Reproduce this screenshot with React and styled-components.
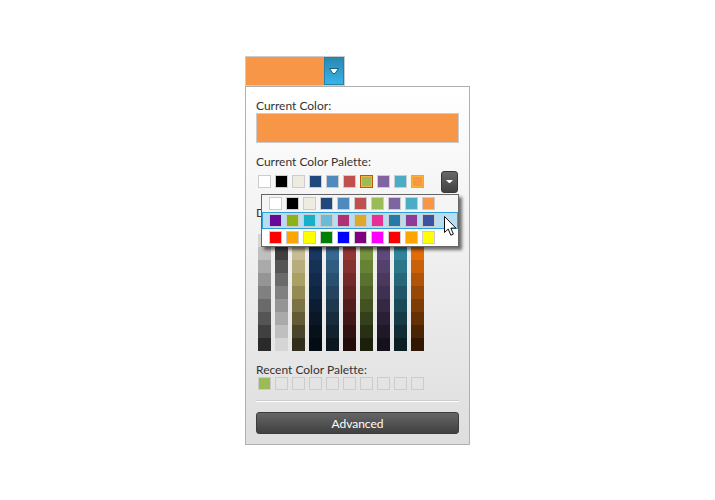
import React, { useState } from 'react';
import styled, { createGlobalStyle } from 'styled-components';

const GlobalStyle = createGlobalStyle`
  *, *::before, *::after { box-sizing: border-box; }
  body {
    margin: 0;
    background: #fff;
    color: #333;
    font: 12px/15px Lato, "Open Sans", sans-serif;
    font-variant-ligatures: none;
  }
  button { font: inherit; padding: 0; cursor: default; }
`;

const Page = styled.main`
  display: flex;
  justify-content: center;
  min-height: 100vh;
  padding: 56px 16px;
`;

const Picker = styled.div`
  width: 225px;
`;

const SplitButton = styled.div`
  display: flex;
  width: 100px;
  height: 30px;
  border: 1px solid #ccc;
`;

const SelectedColor = styled.button`
  flex: 1;
  border: 0;
  background: ${(p) => p.$color};
`;

const DropToggle = styled.button`
  display: grid;
  place-items: center;
  width: 20px;
  border: 1px solid #2382ab;
  background: linear-gradient(#2989b3, #37b3e9);
`;

const Panel = styled.section`
  display: flex;
  flex-direction: column;
  padding: 11px 10px 10px;
  border: 1px solid #b0b0b0;
  background: linear-gradient(#fff, #dedede);
`;

const Label = styled.h2`
  margin: 0;
  font: inherit;
  font-variant-ligatures: none;
  white-space: nowrap;
`;

const Preview = styled.div`
  height: 30px;
  margin-bottom: 11px;
  border: 1px solid #ccc;
  background: ${(p) => p.$color};
`;

const PaletteBar = styled.div`
  position: relative;
  display: flex;
  justify-content: space-between;
  height: 22px;
  margin: 2px 0 12px;
`;

const SwatchRow = styled.div`
  display: flex;
  gap: 4px;
  padding: ${(p) => p.$pad || '0 2px'};
`;

const Swatch = styled.button`
  width: 13px;
  height: 13px;
  border: 1px solid ${(p) => p.$edge || '#ccc'};
  background: ${(p) => p.$color || 'transparent'};
  box-shadow: ${(p) => (p.$glow ? `inset 0 0 0 1px ${p.$glow}` : 'none')};
`;

const MenuButton = styled.button`
  display: grid;
  place-items: center;
  width: 17px;
  height: 22px;
  margin-right: 1px;
  border: 1px solid #383838;
  border-radius: 3px;
  background: linear-gradient(#686868, #404040);
`;

const PaletteMenu = styled.div`
  position: absolute;
  z-index: 1;
  top: 23px;
  left: 5px;
  right: 0;
  border: 1px solid #666;
  background: #fff;
  box-shadow: 3px 3px 3px rgba(0, 0, 0, 0.55);
`;

const PaletteOption = styled.div`
  display: flex;
  gap: 4px;
  height: 17px;
  padding: 2px 7px;
  outline: ${(p) => (p.$active ? '1px solid #2da0da' : 'none')};
  outline-offset: -1px;
  background: ${(p) => (p.$active ? '#b6def0' : p.$current ? '#f5f5f5' : '#fff')};
`;

const Pointer = styled.svg`
  position: absolute;
  z-index: 2;
  top: 45px;
  left: 188px;
`;

const Shades = styled.div`
  display: flex;
  gap: 4px;
  padding: 0 2px;
  margin: 14px 0 11px;
`;

const ShadeColumn = styled.div`
  display: flex;
  flex-direction: column;
`;

const Shade = styled.button`
  width: 13px;
  height: 13px;
  border: 0;
  background: ${(p) => p.$color};
`;

const Divider = styled.hr`
  width: 100%;
  height: 2px;
  margin: 10px 0;
  border: 0;
  border-top: 1px solid #ccc;
  background: #fff;
`;

const AdvancedButton = styled.button`
  height: 22px;
  border: 1px solid #3c3c3c;
  border-radius: 3px;
  background: linear-gradient(#666, #404040);
  color: #fff;
`;

const office = ['#ffffff', '#000000', '#eeece1', '#1f497d', '#4f8abe', '#c0504d', '#9bbb59', '#8064a2', '#4bacc6', '#f79646'];
const palettes = [
  { name: 'Office', colors: office },
  { name: 'Verve', colors: ['#66099b', '#8bb313', '#18b0c8', '#6abbd8', '#b03078', '#dca92d', '#e53197', '#257ba7', '#8f3c98', '#3c53a2'] },
  { name: 'Bright', colors: ['#ff0000', '#ffa500', '#ffff00', '#008000', '#0000ff', '#800080', '#ff00ff', '#ff0000', '#ffa500', '#ffff00'] },
];
const shades = [
  ['#d5d5d5', '#bfbfbf', '#aaaaaa', '#959595', '#808080', '#6a6a6a', '#555555', '#404040', '#2a2a2a'],
  ['#2a2a2a', '#404040', '#555555', '#6a6a6a', '#808080', '#959595', '#aaaaaa', '#bfbfbf', '#d5d5d5'],
  ['#dad4b8', '#c7bd94', '#b7ad7c', '#aba064', '#948a54', '#7b7346', '#625b36', '#4a4429', '#312e1c'],
  ['#1c416f', '#183762', '#153154', '#122b4b', '#102540', '#0c1c33', '#091727', '#06111c', '#030b14'],
  ['#417aaa', '#366891', '#2f5c80', '#29506f', '#24445f', '#1e384d', '#182c3d', '#12222e', '#0c161f'],
  ['#a63e3b', '#943634', '#843130', '#732a29', '#632423', '#521e1d', '#421817', '#311211', '#210c0b'],
  ['#85a446', '#76923c', '#688235', '#5a722f', '#4f6128', '#425221', '#34401a', '#283013', '#1a200c'],
  ['#6d548b', '#5f497a', '#54406c', '#4a385f', '#3f3151', '#352843', '#2a2036', '#201828', '#15101b'],
  ['#3a96ae', '#31859b', '#2c768a', '#266779', '#205867', '#1b4a57', '#163b45', '#102c34', '#0b1e23'],
  ['#f4791f', '#e36c09', '#ca6008', '#b05407', '#974806', '#7e3c05', '#653004', '#4b2403', '#321802'],
];
const slots = [0, 1, 2, 3, 4, 5, 6, 7, 8, 9];

export default function App() {
  const [open, setOpen] = useState(true);
  const current = '#f79646';

  return (
    <>
      <GlobalStyle />
      <Page>
        <Picker>
          <SplitButton>
            <SelectedColor $color={current} aria-label="Selected color" />
            <DropToggle aria-label="Open color picker">
              <svg width="10" height="6" viewBox="0 0 10 6" aria-hidden="true">
                <path d="M.5.5h9L6 5.5H4z" fill="#fff" stroke="#185f78" />
              </svg>
            </DropToggle>
          </SplitButton>
          <Panel>
            <Label>Current Color:</Label>
            <Preview $color={current} />
            <Label>Current Color Palette:</Label>
            <PaletteBar>
              <SwatchRow $pad="4px 2px">
                {office.map((c, i) => (
                  <Swatch
                    key={c}
                    $color={c}
                    $edge={i === 6 ? '#c05a00' : i === 9 ? '#f2a42e' : undefined}
                    $glow={i === 6 ? '#efb64a' : i === 9 ? '#fcb334' : undefined}
                    aria-label={c}
                  />
                ))}
              </SwatchRow>
              <MenuButton aria-label="Choose palette" aria-expanded={open} onClick={() => setOpen(!open)}>
                <svg width="7" height="4" viewBox="0 0 7 4" aria-hidden="true">
                  <path d="M0 0h7L4 3H3z" fill="#fff" />
                </svg>
              </MenuButton>
              {open && (
                <PaletteMenu role="listbox" aria-label="Palettes">
                  {palettes.map((p, i) => (
                    <PaletteOption key={p.name} role="option" aria-label={p.name} $current={i === 0} $active={i === 1}>
                      {p.colors.map((c, n) => (
                        <Swatch as="span" key={n} $color={c} />
                      ))}
                    </PaletteOption>
                  ))}
                </PaletteMenu>
              )}
              <Pointer width="13" height="21" viewBox="0 0 13 21" aria-hidden="true">
                <path d="M.5.5v16l3.7-3.5 2.6 6.2 2.6-1.1-2.6-6h5.1z" fill="#fff" stroke="#111" />
              </Pointer>
            </PaletteBar>
            <Label>D</Label>
            <Shades>
              {shades.map((column, i) => (
                <ShadeColumn key={i}>
                  {column.map((c) => (
                    <Shade key={c} $color={c} aria-label={c} />
                  ))}
                </ShadeColumn>
              ))}
            </Shades>
            <Label>Recent Color Palette:</Label>
            <SwatchRow>
              {slots.map((n) => (
                <Swatch key={n} $color={n === 0 ? '#9bbb59' : undefined} aria-label={n === 0 ? '#9bbb59' : 'Empty'} />
              ))}
            </SwatchRow>
            <Divider />
            <AdvancedButton>Advanced</AdvancedButton>
          </Panel>
        </Picker>
      </Page>
    </>
  );
}
